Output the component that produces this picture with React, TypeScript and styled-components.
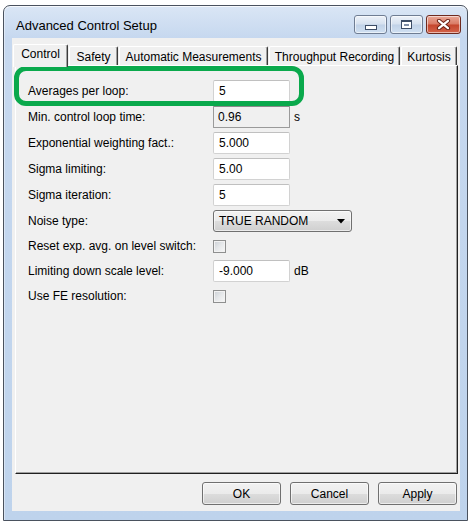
import React from 'react';
import styled, { createGlobalStyle } from 'styled-components';

const Global = createGlobalStyle`
  html, body { margin: 0; padding: 0; background: #ffffff; }
  body { font-family: "Liberation Sans", Arial, sans-serif; font-size: 12px; color: #000; }
  * { box-sizing: border-box; }
`;

const Window = styled.div`
  margin: 5px 0 0 3px;
  width: 465px;
  height: 516px;
  border: 1px solid #4a525e;
  border-radius: 7px 7px 0 0;
  background: linear-gradient(#dae6f5 0px, #c6d8ef 32px, #bed3ec 100%);
  box-shadow: inset 0 1px 0 rgba(255, 255, 255, 0.75), inset 1px 0 0 rgba(255, 255, 255, 0.4);
  display: flex;
  flex-direction: column;
  padding: 0 7px 9px 8px;
`;

const TitleBar = styled.div`
  height: 32px;
  flex: none;
  display: flex;
  align-items: flex-start;
  justify-content: space-between;
`;

const Title = styled.div`
  font-size: 13px;
  line-height: 15px;
  margin: 12px 0 0 4px;
  color: #000;
`;

const CaptionGroup = styled.div`
  display: flex;
  gap: 3px;
  margin: 9px -1px 0 0;
`;

const CaptionButton = styled.div<{ $w: number; $close?: boolean }>`
  width: ${(p) => p.$w}px;
  height: 19px;
  border: 1px solid ${(p) => (p.$close ? '#6e2a1f' : '#6f7d93')};
  border-radius: 3px;
  background: ${(p) =>
    p.$close
      ? 'linear-gradient(#eaa796 0%, #d97a65 48%, #c5452d 52%, #d3644b 100%)'
      : 'linear-gradient(#edf2f9 0%, #d6e1ef 48%, #c1d2e7 52%, #d0e0f2 100%)'};
  box-shadow: inset 0 0 0 1px rgba(255, 255, 255, 0.55);
  display: flex;
  align-items: center;
  justify-content: center;
`;

const MinGlyph = styled.div`
  width: 12px;
  height: 5px;
  margin-top: 6px;
  border: 1px solid #3d4d66;
  background: #fff;
`;

const MaxGlyph = styled.div`
  width: 11px;
  height: 9px;
  border: 1px solid #3d4d66;
  border-top-width: 2px;
  background: #fff;
  box-shadow: inset 0 0 0 2px #fff, inset 0 0 0 3px #8190a8;
`;

const Client = styled.div`
  flex: 1;
  background: #f0f0f0;
  display: flex;
  flex-direction: column;
  padding: 6px 2px 0 1px;
`;

const TabRow = styled.div`
  height: 21px;
  flex: none;
  display: flex;
  align-items: flex-end;
  gap: 1px;
  position: relative;
  z-index: 1;
`;

const Tab = styled.div<{ $w: number; $active?: boolean }>`
  width: ${(p) => p.$w}px;
  height: ${(p) => (p.$active ? 23 : 19)}px;
  margin-bottom: ${(p) => (p.$active ? -2 : 0)}px;
  padding-top: ${(p) => (p.$active ? 2 : 3)}px;
  background: #f0f0f0;
  border-top: 1px solid #ffffff;
  border-left: 1px solid #ffffff;
  border-right: 1px solid #3c3c3c;
  box-shadow: inset -1px 0 0 #a0a0a0;
  border-radius: 2px 2px 0 0;
  display: flex;
  justify-content: center;
  align-items: flex-start;
  line-height: 14px;
  white-space: nowrap;
  color: #000;
`;

const Panel = styled.div`
  flex: none;
  height: 409px;
  margin-left: 2px;
  border-top: 1px solid #ffffff;
  border-left: 1px solid #ffffff;
  border-right: 1px solid #202020;
  border-bottom: 1px solid #202020;
  box-shadow: inset -1px -1px 0 #a0a0a0;
  position: relative;
  padding: 12px 0 0 12px;
  display: flex;
  flex-direction: column;
`;

const Highlight = styled.div`
  position: absolute;
  left: -2px;
  top: 0px;
  width: 290px;
  height: 40px;
  border: 5px solid #0aa94c;
  border-radius: 12px;
  pointer-events: none;
`;

const Row = styled.div<{ $h: number }>`
  height: ${(p) => p.$h}px;
  display: flex;
  align-items: center;
`;

const Label = styled.div`
  width: 185px;
  flex: none;
  line-height: 14px;
  white-space: nowrap;
`;

const TextBox = styled.input<{ $disabled?: boolean }>`
  width: 77px;
  height: 22px;
  margin: 0;
  padding: 0 0 0 ${(p) => (p.$disabled ? 4 : 5)}px;
  font-family: "Liberation Sans", Arial, sans-serif;
  font-size: 12px;
  color: #000;
  outline: none;
  border: 1px solid ${(p) => (p.$disabled ? '#9a9a9a' : '#d2d2d2')};
  border-top-color: ${(p) => (p.$disabled ? '#8a8a8a' : '#c0c0c0')};
  border-radius: ${(p) => (p.$disabled ? 1 : 2)}px;
  background: ${(p) => (p.$disabled ? '#f0f0f0' : '#ffffff')};
`;

const Unit = styled.span`
  margin-left: 4px;
  line-height: 14px;
`;

const Select = styled.div`
  width: 139px;
  height: 22px;
  border: 1px solid #707070;
  border-radius: 3px;
  background: linear-gradient(#f2f2f2 0%, #ebebeb 50%, #dddddd 50%, #cfcfcf 100%);
  box-shadow: inset 0 0 0 1px rgba(255, 255, 255, 0.6);
  display: flex;
  align-items: center;
  justify-content: space-between;
  padding: 0 6px 0 5px;
  line-height: 14px;
`;

const CheckBox = styled.div`
  width: 13px;
  height: 13px;
  border: 1px solid #8e8f8f;
  background: linear-gradient(135deg, #cbcfd5 0%, #e6e8ea 50%, #f7f7f7 100%);
  box-shadow: inset 0 0 0 1px #f2f2f2;
`;

const ButtonRow = styled.div`
  display: flex;
  justify-content: flex-end;
  gap: 9px;
  margin-top: 8px;
  padding-right: 1px;
`;

const Button = styled.button`
  width: 79px;
  height: 23px;
  margin: 0;
  padding: 0;
  border: 1px solid #707070;
  border-radius: 3px;
  background: linear-gradient(#f2f2f2 0%, #ebebeb 50%, #dddddd 50%, #cfcfcf 100%);
  box-shadow: inset 0 0 0 1px rgba(255, 255, 255, 0.6);
  font-family: "Liberation Sans", Arial, sans-serif;
  font-size: 12px;
  color: #000;
`;

const tabs = [
  { label: 'Control', w: 55, active: true },
  { label: 'Safety', w: 49 },
  { label: 'Automatic Measurements', w: 149 },
  { label: 'Throughput Recording', w: 131 },
  { label: 'Kurtosis', w: 56 },
];

const CloseX = () => (
  <svg width="15" height="11" viewBox="0 0 15 11">
    <path d="M3 1.8 L12 9.2 M12 1.8 L3 9.2" stroke="#6a2216" strokeWidth="4.2" strokeLinecap="round" fill="none" />
    <path d="M3 1.8 L12 9.2 M12 1.8 L3 9.2" stroke="#ffffff" strokeWidth="2.2" strokeLinecap="round" fill="none" />
  </svg>
);

const Arrow = () => (
  <svg width="8" height="5" viewBox="0 0 8 5">
    <path d="M0 0 L8 0 L4 4.5 Z" fill="#000" />
  </svg>
);

export default function App() {
  return (
    <>
      <Global />
      <Window>
        <TitleBar>
          <Title>Advanced Control Setup</Title>
          <CaptionGroup>
            <CaptionButton $w={33}>
              <MinGlyph />
            </CaptionButton>
            <CaptionButton $w={33}>
              <MaxGlyph />
            </CaptionButton>
            <CaptionButton $w={35} $close>
              <CloseX />
            </CaptionButton>
          </CaptionGroup>
        </TitleBar>
        <Client>
          <TabRow>
            {tabs.map((t) => (
              <Tab key={t.label} $w={t.w} $active={t.active}>
                {t.label}
              </Tab>
            ))}
          </TabRow>
          <Panel>
            <Row $h={26}>
              <Label>Averages per loop:</Label>
              <TextBox readOnly defaultValue="5" />
            </Row>
            <Row $h={26}>
              <Label>Min. control loop time:</Label>
              <TextBox $disabled readOnly defaultValue="0.96" />
              <Unit>s</Unit>
            </Row>
            <Row $h={26}>
              <Label>Exponential weighting fact.:</Label>
              <TextBox readOnly defaultValue="5.000" />
            </Row>
            <Row $h={26}>
              <Label>Sigma limiting:</Label>
              <TextBox readOnly defaultValue="5.00" />
            </Row>
            <Row $h={26}>
              <Label>Sigma iteration:</Label>
              <TextBox readOnly defaultValue="5" />
            </Row>
            <Row $h={26}>
              <Label>Noise type:</Label>
              <Select>
                <span>TRUE RANDOM</span>
                <Arrow />
              </Select>
            </Row>
            <Row $h={24}>
              <Label>Reset exp. avg. on level switch:</Label>
              <CheckBox />
            </Row>
            <Row $h={26}>
              <Label>Limiting down scale level:</Label>
              <TextBox readOnly defaultValue="-9.000" />
              <Unit>dB</Unit>
            </Row>
            <Row $h={24}>
              <Label>Use FE resolution:</Label>
              <CheckBox />
            </Row>
            <Highlight />
          </Panel>
          <ButtonRow>
            <Button>OK</Button>
            <Button>Cancel</Button>
            <Button>Apply</Button>
          </ButtonRow>
        </Client>
      </Window>
    </>
  );
}
